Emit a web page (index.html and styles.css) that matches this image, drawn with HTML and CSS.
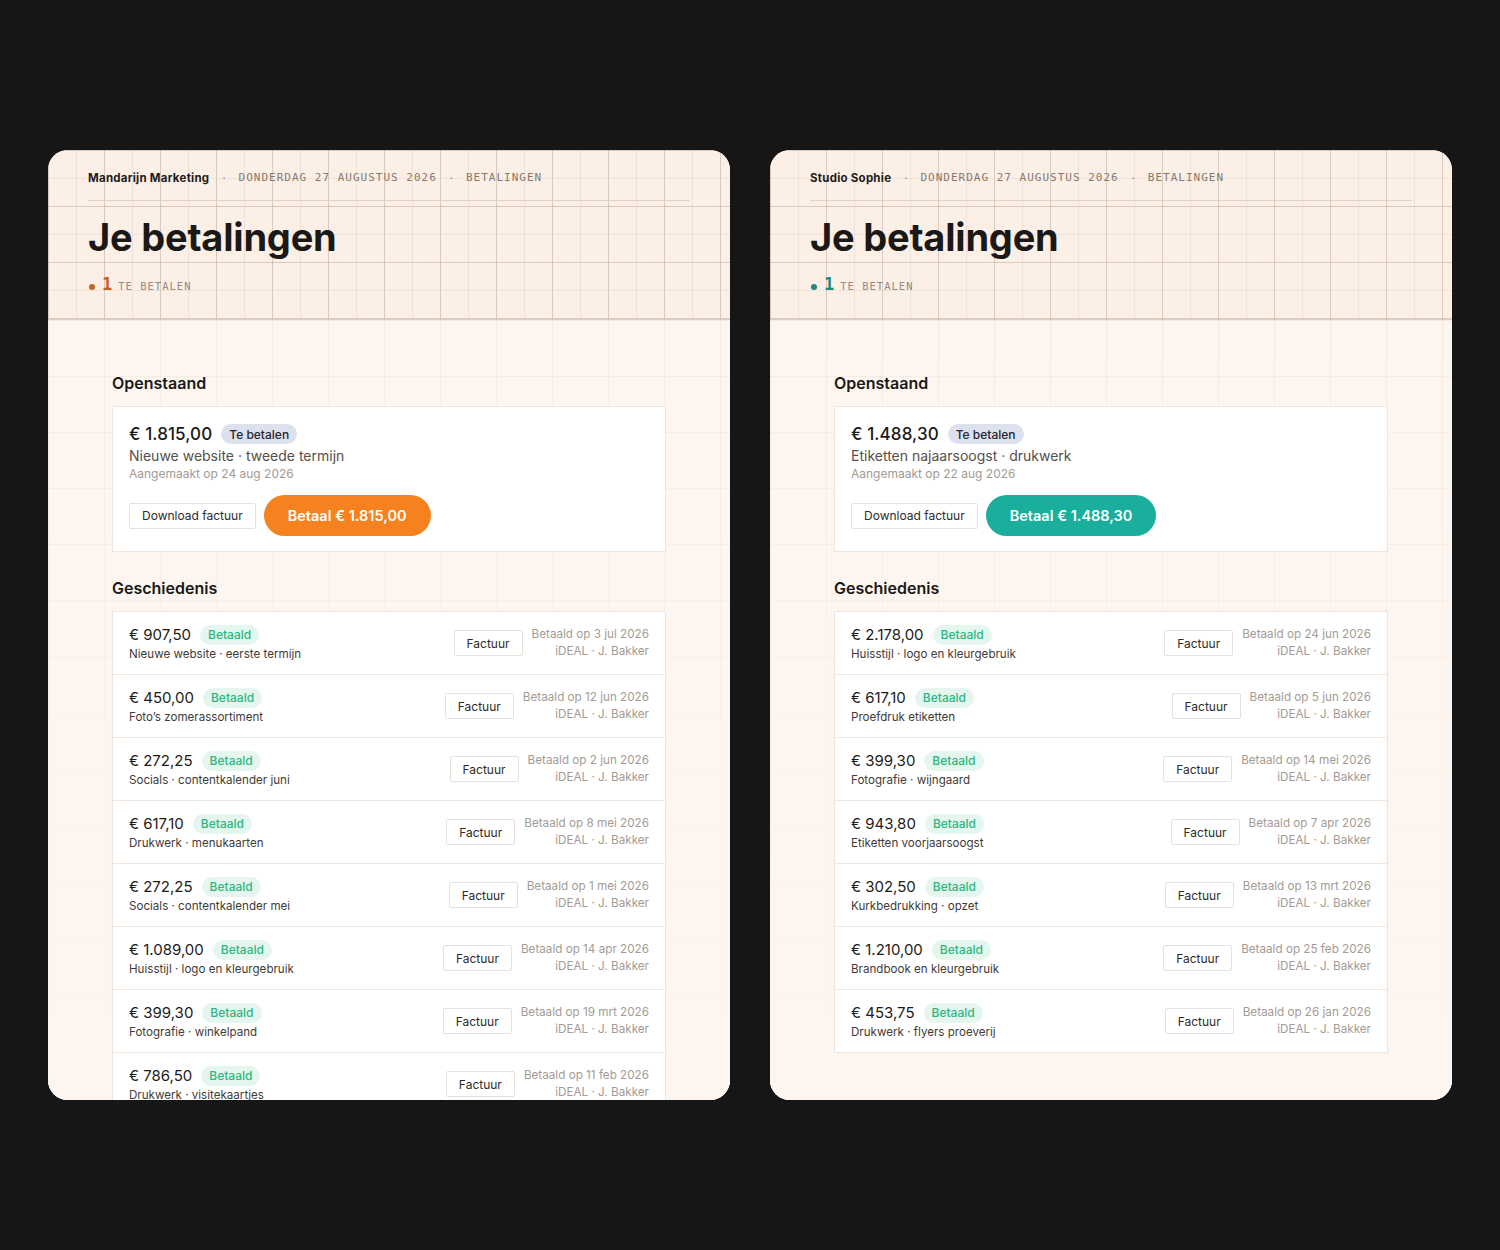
FILE: index.html
```html
<!DOCTYPE html>
<html lang="nl">
<head>
<meta charset="utf-8">
<title>Je betalingen</title>
<link rel="stylesheet" href="styles.css">
</head>
<body>
<div class="stage">

  <section class="card theme-orange">
    <header class="head">
      <div class="meta">
        <span class="brand">Mandarijn Marketing</span>
        <span class="sep">·</span>
        <span class="mono">DONDERDAG 27 AUGUSTUS 2026</span>
        <span class="sep">·</span>
        <span class="mono">BETALINGEN</span>
      </div>
      <h1 class="title">Je betalingen</h1>
      <div class="count"><span class="dot"></span><span class="num">1</span><span class="mono small">TE BETALEN</span></div>
    </header>
    <div class="body">
      <h2 class="section">Openstaand</h2>
      <div class="open">
        <div class="amount-row"><span class="amount-lg">€ 1.815,00</span><span class="badge due">Te betalen</span></div>
        <div class="desc">Nieuwe website · tweede termijn</div>
        <div class="created">Aangemaakt op 24 aug 2026</div>
        <div class="actions">
          <button class="btn-ghost">Download factuur</button>
          <button class="btn-pay">Betaal € 1.815,00</button>
        </div>
      </div>
      <h2 class="section">Geschiedenis</h2>
      <div class="list">
        <div class="row"><div class="left"><div class="amt-line"><span class="amount">€ 907,50</span><span class="badge paid">Betaald</span></div><div class="rdesc">Nieuwe website · eerste termijn</div></div><button class="btn-inv">Factuur</button><div class="right"><div>Betaald op 3 jul 2026</div><div>iDEAL · J. Bakker</div></div></div>
        <div class="row"><div class="left"><div class="amt-line"><span class="amount">€ 450,00</span><span class="badge paid">Betaald</span></div><div class="rdesc">Foto’s zomerassortiment</div></div><button class="btn-inv">Factuur</button><div class="right"><div>Betaald op 12 jun 2026</div><div>iDEAL · J. Bakker</div></div></div>
        <div class="row"><div class="left"><div class="amt-line"><span class="amount">€ 272,25</span><span class="badge paid">Betaald</span></div><div class="rdesc">Socials · contentkalender juni</div></div><button class="btn-inv">Factuur</button><div class="right"><div>Betaald op 2 jun 2026</div><div>iDEAL · J. Bakker</div></div></div>
        <div class="row"><div class="left"><div class="amt-line"><span class="amount">€ 617,10</span><span class="badge paid">Betaald</span></div><div class="rdesc">Drukwerk · menukaarten</div></div><button class="btn-inv">Factuur</button><div class="right"><div>Betaald op 8 mei 2026</div><div>iDEAL · J. Bakker</div></div></div>
        <div class="row"><div class="left"><div class="amt-line"><span class="amount">€ 272,25</span><span class="badge paid">Betaald</span></div><div class="rdesc">Socials · contentkalender mei</div></div><button class="btn-inv">Factuur</button><div class="right"><div>Betaald op 1 mei 2026</div><div>iDEAL · J. Bakker</div></div></div>
        <div class="row"><div class="left"><div class="amt-line"><span class="amount">€ 1.089,00</span><span class="badge paid">Betaald</span></div><div class="rdesc">Huisstijl · logo en kleurgebruik</div></div><button class="btn-inv">Factuur</button><div class="right"><div>Betaald op 14 apr 2026</div><div>iDEAL · J. Bakker</div></div></div>
        <div class="row"><div class="left"><div class="amt-line"><span class="amount">€ 399,30</span><span class="badge paid">Betaald</span></div><div class="rdesc">Fotografie · winkelpand</div></div><button class="btn-inv">Factuur</button><div class="right"><div>Betaald op 19 mrt 2026</div><div>iDEAL · J. Bakker</div></div></div>
        <div class="row"><div class="left"><div class="amt-line"><span class="amount">€ 786,50</span><span class="badge paid">Betaald</span></div><div class="rdesc">Drukwerk · visitekaartjes</div></div><button class="btn-inv">Factuur</button><div class="right"><div>Betaald op 11 feb 2026</div><div>iDEAL · J. Bakker</div></div></div>
      </div>
    </div>
  </section>

  <section class="card theme-teal">
    <header class="head">
      <div class="meta">
        <span class="brand">Studio Sophie</span>
        <span class="sep">·</span>
        <span class="mono">DONDERDAG 27 AUGUSTUS 2026</span>
        <span class="sep">·</span>
        <span class="mono">BETALINGEN</span>
      </div>
      <h1 class="title">Je betalingen</h1>
      <div class="count"><span class="dot"></span><span class="num">1</span><span class="mono small">TE BETALEN</span></div>
    </header>
    <div class="body">
      <h2 class="section">Openstaand</h2>
      <div class="open">
        <div class="amount-row"><span class="amount-lg">€ 1.488,30</span><span class="badge due">Te betalen</span></div>
        <div class="desc">Etiketten najaarsoogst · drukwerk</div>
        <div class="created">Aangemaakt op 22 aug 2026</div>
        <div class="actions">
          <button class="btn-ghost">Download factuur</button>
          <button class="btn-pay">Betaal € 1.488,30</button>
        </div>
      </div>
      <h2 class="section">Geschiedenis</h2>
      <div class="list">
        <div class="row"><div class="left"><div class="amt-line"><span class="amount">€ 2.178,00</span><span class="badge paid">Betaald</span></div><div class="rdesc">Huisstijl · logo en kleurgebruik</div></div><button class="btn-inv">Factuur</button><div class="right"><div>Betaald op 24 jun 2026</div><div>iDEAL · J. Bakker</div></div></div>
        <div class="row"><div class="left"><div class="amt-line"><span class="amount">€ 617,10</span><span class="badge paid">Betaald</span></div><div class="rdesc">Proefdruk etiketten</div></div><button class="btn-inv">Factuur</button><div class="right"><div>Betaald op 5 jun 2026</div><div>iDEAL · J. Bakker</div></div></div>
        <div class="row"><div class="left"><div class="amt-line"><span class="amount">€ 399,30</span><span class="badge paid">Betaald</span></div><div class="rdesc">Fotografie · wijngaard</div></div><button class="btn-inv">Factuur</button><div class="right"><div>Betaald op 14 mei 2026</div><div>iDEAL · J. Bakker</div></div></div>
        <div class="row"><div class="left"><div class="amt-line"><span class="amount">€ 943,80</span><span class="badge paid">Betaald</span></div><div class="rdesc">Etiketten voorjaarsoogst</div></div><button class="btn-inv">Factuur</button><div class="right"><div>Betaald op 7 apr 2026</div><div>iDEAL · J. Bakker</div></div></div>
        <div class="row"><div class="left"><div class="amt-line"><span class="amount">€ 302,50</span><span class="badge paid">Betaald</span></div><div class="rdesc">Kurkbedrukking · opzet</div></div><button class="btn-inv">Factuur</button><div class="right"><div>Betaald op 13 mrt 2026</div><div>iDEAL · J. Bakker</div></div></div>
        <div class="row"><div class="left"><div class="amt-line"><span class="amount">€ 1.210,00</span><span class="badge paid">Betaald</span></div><div class="rdesc">Brandbook en kleurgebruik</div></div><button class="btn-inv">Factuur</button><div class="right"><div>Betaald op 25 feb 2026</div><div>iDEAL · J. Bakker</div></div></div>
        <div class="row"><div class="left"><div class="amt-line"><span class="amount">€ 453,75</span><span class="badge paid">Betaald</span></div><div class="rdesc">Drukwerk · flyers proeverij</div></div><button class="btn-inv">Factuur</button><div class="right"><div>Betaald op 26 jan 2026</div><div>iDEAL · J. Bakker</div></div></div>
      </div>
    </div>
  </section>

</div>
</body>
</html>
```

FILE: styles.css
```css
* { box-sizing: border-box; }
html, body { margin: 0; padding: 0; }
body {
  background: #161616;
  font-family: "Inter", "Noto Sans", sans-serif;
  color: #1d1b19;
  width: 1500px;
  height: 1250px;
  overflow: hidden;
}
.stage {
  display: flex;
  gap: 40px;
  padding: 150px 48px 0;
}
.card {
  width: 682px;
  height: 950px;
  border-radius: 20px;
  overflow: hidden;
  background: #fdf6f0;
  display: flex;
  flex-direction: column;
}
.theme-orange { --accent: #f5821f; --accent-dark: #c46325; }
.theme-teal { --accent: #1aae9d; --accent-dark: #1b8b7d; }

.head {
  height: 170px;
  flex: none;
  padding: 0 40px;
  border-bottom: 1px solid #dccdc2;
  background-color: #fcefe6;
  background-image:
    linear-gradient(to right, rgba(110, 80, 60, 0.16) 1px, transparent 1px),
    linear-gradient(to bottom, rgba(110, 80, 60, 0.16) 1px, transparent 1px),
    linear-gradient(to right, rgba(110, 80, 60, 0.08) 1px, transparent 1px),
    linear-gradient(to bottom, rgba(110, 80, 60, 0.08) 1px, transparent 1px);
  background-size: 56px 56px, 56px 56px, 28px 28px, 28px 28px;
  background-position: 0 0;
}
.meta {
  display: flex;
  align-items: center;
  gap: 13px;
  height: 51px;
  padding-top: 19px;
  padding-bottom: 14px;
  border-bottom: 1px solid #e2d3c8;
  line-height: 18px;
}
.brand {
  font-size: 11.5px;
  font-weight: 700;
  color: #1d1b19;
  letter-spacing: 0.25px;
}
.sep { color: #8d847c; font-size: 11px; }
.mono {
  font-family: "DejaVu Sans Mono", "Liberation Mono", monospace;
  font-size: 11px;
  letter-spacing: 1px;
  color: #85796f;
}
.title {
  margin: 14px 0 0;
  font-size: 38px;
  line-height: 44px;
  font-weight: 700;
  letter-spacing: -0.2px;
  color: #1a1917;
}
.count {
  margin-top: 16px;
  display: flex;
  align-items: center;
  height: 20px;
}
.dot {
  width: 6px; height: 6px; border-radius: 50%;
  background: var(--accent-dark);
  margin-left: 1px;
  margin-top: 3px;
}
.num {
  font-family: "DejaVu Sans Mono", "Liberation Mono", monospace;
  font-size: 17px;
  font-weight: 700;
  color: var(--accent-dark);
  margin-left: 7px;
  margin-right: 6px;
  line-height: 20px;
  margin-top: -3px;
}
.mono.small { font-size: 10.5px; color: #958a80; margin-top: 2px; }

.body {
  flex: 1;
  padding: 0 64px;
  background-color: #fdf6f0;
  background-image:
    linear-gradient(to bottom, rgba(253, 246, 240, 0) 0px, rgba(253, 246, 240, 1) 700px),
    linear-gradient(to right, rgba(150, 110, 80, 0.08) 1px, transparent 1px),
    linear-gradient(to bottom, rgba(150, 110, 80, 0.08) 1px, transparent 1px);
  background-size: 100% 100%, 56px 56px, 56px 56px;
  background-position: 0 0, 0 0, 0 0;
}
.section {
  margin: 52px 0 12px;
  font-size: 16px;
  line-height: 22px;
  font-weight: 600;
  color: #1a1917;
}
.open + .section { margin-top: 25px; }
.open {
  background: #fff;
  border: 1px solid #f0e5dc;
  padding: 15px 16px 15px;
}
.amount-row { display: flex; align-items: center; gap: 9px; height: 24px; }
.amount-lg { font-size: 17px; font-weight: 500; color: #1a1917; letter-spacing: 0.1px; }
.badge {
  display: inline-flex;
  align-items: center;
  height: 20px;
  padding: 0 8px;
  border-radius: 10px;
  font-size: 12px;
  font-weight: 500;
}
.badge.due { background: #dde1ed; color: #262631; }
.badge.paid { background: #e5f6ee; color: #2db681; }
.desc { font-size: 14px; line-height: 20px; color: #55504b; }
.created { font-size: 12px; line-height: 16px; color: #a39b94; }
.actions { display: flex; align-items: center; gap: 8px; margin-top: 13px; }
button { font-family: inherit; cursor: pointer; }
.btn-ghost {
  height: 26px;
  padding: 0 12px;
  background: #fff;
  border: 1px solid #e9e0d8;
  border-radius: 2px;
  font-size: 12px;
  color: #2e2b28;
}
.btn-pay {
  height: 41px;
  padding: 0 24px;
  border: none;
  border-radius: 21px;
  background: var(--accent);
  color: #fff;
  font-size: 14.5px;
  font-weight: 600;
}
.list {
  background: #fff;
  border: 1px solid #f0e5dc;
}
.row {
  height: 63px;
  display: flex;
  align-items: center;
  padding: 0 16px;
  border-bottom: 1px solid #f0e7df;
}
.row:last-child { border-bottom: none; height: 62px; }
.left { flex: 1; }
.amt-line { display: flex; align-items: center; gap: 9px; height: 20px; }
.amount { font-size: 15px; color: #1d1b19; }
.rdesc { font-size: 11.6px; line-height: 16px; color: #3f3b37; margin-top: 1px; }
.btn-inv {
  height: 26px;
  padding: 0 12px;
  background: #fff;
  border: 1px solid #e9e0d8;
  border-radius: 2px;
  font-size: 12px;
  color: #2e2b28;
  margin-right: 9px;
}
.right {
  text-align: right;
  font-size: 11.7px;
  line-height: 17px;
  color: #a39b94;
}
```
